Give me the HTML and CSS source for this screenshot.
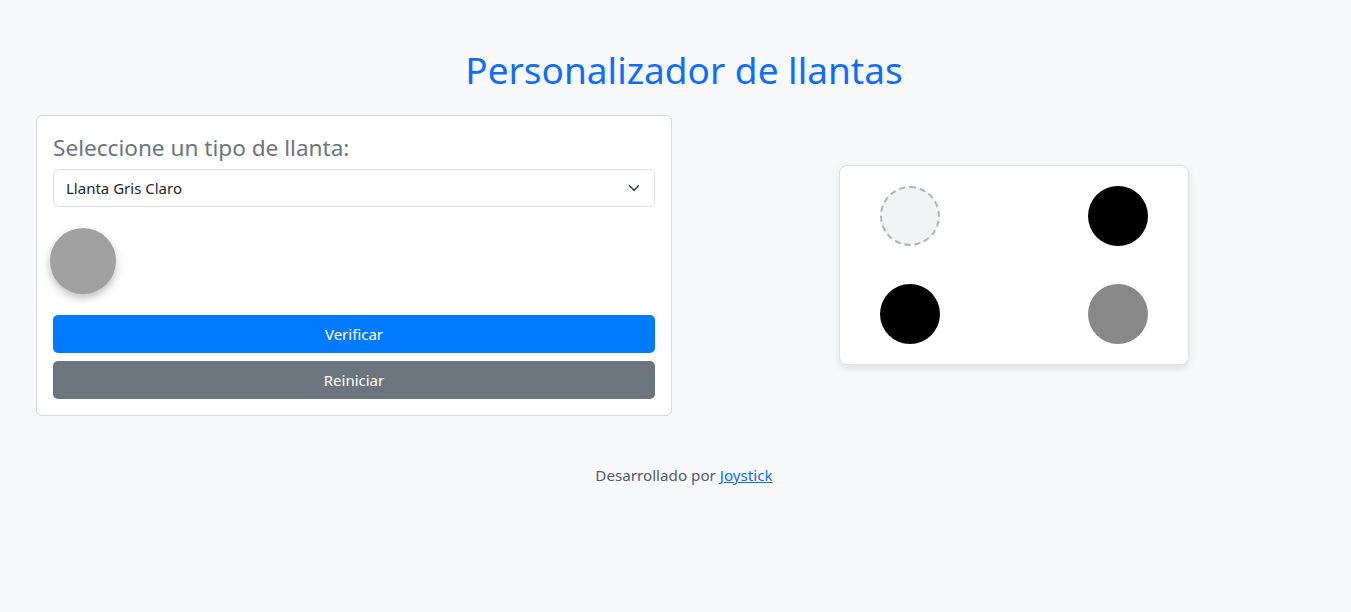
FILE: index.html
```html
<!DOCTYPE html>
<html lang="es">
<head>
    <meta charset="UTF-8">
    <meta name="viewport" content="width=device-width, initial-scale=1.0">
    <title>Personalizador de llantas</title>
    <link rel="stylesheet" href="styles.css">
</head>
<body>
    <div class="page">
        <h1 class="title">Personalizador de llantas</h1>
        <div class="layout">
            <div class="panel">
                <label class="panel-label" for="tipo">Seleccione un tipo de llanta:</label>
                <div class="select-wrap">
                    <select id="tipo" class="select">
                        <option>Llanta Gris Claro</option>
                        <option>Llanta Negra</option>
                        <option>Llanta Gris Oscuro</option>
                    </select>
                    <svg class="chevron" width="16" height="12" viewBox="0 0 16 16">
                        <path d="M2 5l6 6 6-6" fill="none" stroke="#343a40" stroke-width="2" stroke-linecap="round" stroke-linejoin="round"/>
                    </svg>
                </div>
                <div class="preview">
                    <div class="tire tire-light-gray"></div>
                </div>
                <button class="btn btn-primary">Verificar</button>
                <button class="btn btn-secondary">Reiniciar</button>
            </div>
            <div class="car-col">
                <div class="car">
                    <div class="slot slot-empty"></div>
                    <div class="slot slot-black"></div>
                    <div class="slot slot-black"></div>
                    <div class="slot slot-gray"></div>
                </div>
            </div>
        </div>
        <footer class="footer">
            Desarrollado por <a href="#">Joystick</a>
        </footer>
    </div>
</body>
</html>
```
FILE: styles.css
```css
body {
    margin: 0;
    font-family: 'Noto Sans', 'Liberation Sans', sans-serif;
    background-color: #f8f9fa;
    color: #212529;
}
.page {
    padding: 0 19px 0 36px;
}
.title {
    margin: 0;
    padding-top: 48px;
    text-align: center;
    font-size: 37px;
    font-weight: 400;
    line-height: 44px;
    color: #0d6efd;
}
.layout {
    display: grid;
    grid-template-columns: 636px 1fr;
    gap: 24px;
    padding-top: 23px;
}
.panel {
    background: white;
    border: 1px solid #d7d9dc;
    border-radius: 6px;
    padding: 16px;
    display: flex;
    flex-direction: column;
}
.panel-label {
    font-size: 22.6px;
    line-height: 27px;
    color: #6c757d;
    margin-top: 2px;
    margin-bottom: 8px;
}
.select-wrap {
    position: relative;
}
.select {
    width: 100%;
    height: 38px;
    appearance: none;
    border: 1px solid #dee2e6;
    border-radius: 6px;
    background: white;
    padding: 0 36px 0 12px;
    font-family: inherit;
    font-size: 15px;
    color: #212529;
}
.chevron {
    position: absolute;
    right: 13px;
    top: 13px;
    pointer-events: none;
}
.preview {
    height: 66px;
    margin: 21px 0 21px -3px;
}
.tire {
    width: 66px;
    height: 66px;
    border-radius: 50%;
    box-shadow: 0 4px 8px rgba(0, 0, 0, 0.25);
}
.tire-light-gray {
    background: #a0a0a0;
}
.btn {
    height: 38px;
    border: none;
    border-radius: 5px;
    font-family: inherit;
    font-size: 15px;
    color: white;
    cursor: pointer;
}
.btn + .btn {
    margin-top: 8px;
}
.btn-primary {
    background: #007bff;
}
.btn-secondary {
    background: #6c757d;
}
.car-col {
    display: flex;
    justify-content: center;
    padding-top: 50px;
}
.car {
    align-self: flex-start;
    background: white;
    border: 1px solid #dfe1e4;
    border-radius: 8px;
    box-shadow: 0 4px 8px rgba(0, 0, 0, 0.1);
    padding: 20px 40px;
    display: grid;
    grid-template-columns: 60px 60px;
    column-gap: 148px;
    row-gap: 38px;
}
.slot {
    width: 60px;
    height: 60px;
    border-radius: 50%;
    box-sizing: border-box;
}
.slot-empty {
    background: #f1f3f5;
    border: 2px dashed #adb5bd;
}
.slot-black {
    background: #000;
}
.slot-gray {
    background: #888;
}
.footer {
    text-align: center;
    margin-top: 49px;
    font-size: 15.2px;
    color: #555b61;
}
.footer a {
    color: #0d6efd;
}
```
